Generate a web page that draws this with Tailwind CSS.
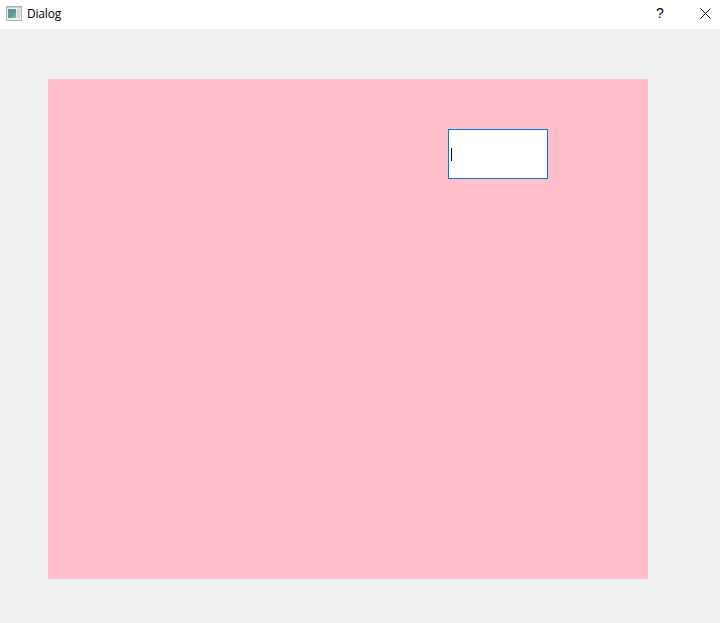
<!DOCTYPE html>
<html lang="en">
<head>
  <meta charset="UTF-8" />
  <title>Dialog</title>
  <script src="https://cdn.jsdelivr.net/npm/@tailwindcss/browser@4"></script>
</head>
<body class="w-[720px] h-[623px] overflow-hidden bg-[#f0f0f0] font-['Liberation_Sans',sans-serif]">
  <!-- title bar -->
  <div class="h-[29px] bg-white flex items-center">
    <svg class="ml-[6px] mb-[2px] w-[16px] h-[15px]" viewBox="0 0 16 15" shape-rendering="crispEdges">
      <defs>
        <linearGradient id="pane" x1="0" y1="0" x2="1" y2="1">
          <stop offset="0" stop-color="#5b8fb0"/>
          <stop offset="0.6" stop-color="#4f9f8a"/>
          <stop offset="1" stop-color="#8fc49a"/>
        </linearGradient>
      </defs>
      <rect x="0.5" y="0.5" width="15" height="14" fill="#eceeee" stroke="#b0b0b0"/>
      <rect x="1" y="1" width="14" height="1" fill="#c8cccc"/>
      <rect x="2" y="3" width="8" height="9" fill="url(#pane)"/>
      <rect x="11" y="3" width="3" height="9" fill="#d2d6d6"/>
    </svg>
    <span class="ml-[5px] mb-[1px] text-[12px] tracking-[-0.2px] font-['Open_Sans',sans-serif] text-black">Dialog</span>
    <span class="ml-auto mb-[2px] w-[46px] pl-[2px] text-center text-[14px] text-black">?</span>
    <div class="w-[46px] mb-[3px] flex justify-center mr-[-8px]">
      <svg class="w-[11px] h-[11px]" viewBox="0 0 11 11"><path d="M0.5 0.5L10.5 10.5M10.5 0.5L0.5 10.5" stroke="#111" fill="none"/></svg>
    </div>
  </div>
  <!-- dialog body -->
  <div class="pt-[50px] pl-[48px]">
    <div class="w-[600px] h-[500px] bg-[#ffc0cb] pt-[50px] pl-[400px]">
      <div class="w-[100px] h-[50px] bg-white border border-[#0078d7] flex items-center pl-[2px]">
        <div class="w-px h-[13px] bg-black"></div>
      </div>
    </div>
  </div>
</body>
</html>
